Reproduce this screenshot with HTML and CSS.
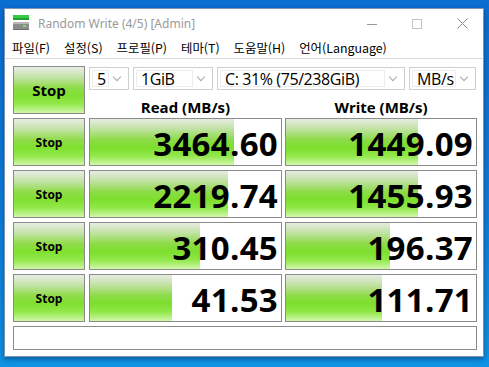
FILE: index.html
```html
<!DOCTYPE html>
<html lang="ko">
<head>
<meta charset="utf-8">
<title>Random Write (4/5) [Admin]</title>
<link rel="stylesheet" href="styles.css">
</head>
<body>
<div class="window">
  <div class="titlebar">
    <svg class="appicon" width="16" height="16" viewBox="0 0 16 16">
      <rect x="0" y="0" width="16" height="3" fill="#33cc44"/>
      <rect x="0" y="3" width="16" height="2" fill="#22a033"/>
      <rect x="0" y="7" width="16" height="2" fill="#b8b8b8"/>
      <rect x="0" y="9" width="16" height="6" fill="#8c8c8c"/>
      <rect x="10" y="10" width="3" height="2" fill="#7ddc6a"/>
      <rect x="0" y="14" width="16" height="1" fill="#6e6e6e"/>
    </svg>
    <span class="title">Random Write (4/5) [Admin]</span>
    <div class="controls">
      <svg class="ctl" width="10" height="10" viewBox="0 0 10 10"><path d="M0 5.5H10" stroke="#9a9a9a" stroke-width="1"/></svg>
      <svg class="ctl" width="10" height="10" viewBox="0 0 10 10"><rect x="0.5" y="0.5" width="9" height="9" fill="none" stroke="#c4c4c4" stroke-width="1"/></svg>
      <svg class="ctl" width="11" height="11" viewBox="0 0 11 11"><path d="M0.5 0.5L10.5 10.5M10.5 0.5L0.5 10.5" stroke="#8a8a8a" stroke-width="1"/></svg>
    </div>
  </div>
  <div class="menubar">
    <span class="menu">파일(F)</span>
    <span class="menu">설정(S)</span>
    <span class="menu">프로필(P)</span>
    <span class="menu">테마(T)</span>
    <span class="menu">도움말(H)</span>
    <span class="menu">언어(Language)</span>
  </div>
  <div class="client">
    <div class="board">
      <div class="btn big">Stop</div>
      <div class="topright">
        <div class="combos">
          <div class="combo w5"><span class="val">5</span><span class="arrow"></span></div>
          <div class="combo wsize"><span class="val">1GiB</span><span class="arrow"></span></div>
          <div class="combo wdrive"><span class="val">C: 31% (75/238GiB)</span><span class="arrow"></span></div>
          <div class="combo wunit"><span class="val">MB/s</span><span class="arrow"></span></div>
        </div>
        <div class="heads">
          <div class="head">Read (MB/s)</div>
          <div class="head">Write (MB/s)</div>
        </div>
      </div>

      <div class="btn">Stop</div>
      <div class="cell" style="--w:144px">3464.60</div>
      <div class="cell" style="--w:132px">1449.09</div>

      <div class="btn">Stop</div>
      <div class="cell" style="--w:138px">2219.74</div>
      <div class="cell" style="--w:132px">1455.93</div>

      <div class="btn">Stop</div>
      <div class="cell" style="--w:110px">310.45</div>
      <div class="cell" style="--w:104px">196.37</div>

      <div class="btn">Stop</div>
      <div class="cell" style="--w:82px">41.53</div>
      <div class="cell" style="--w:96px">111.71</div>

      <div class="status"></div>
    </div>
  </div>
</div>
</body>
</html>
```

FILE: styles.css
```css
* { box-sizing: border-box; }
html, body { margin: 0; padding: 0; }
body {
  width: 489px;
  height: 367px;
  overflow: hidden;
  background: linear-gradient(180deg, #0b6ed1 0%, #0a7ddb 55%, #0f92e4 100%);
  font-family: "Open Sans", "Noto Sans CJK KR", sans-serif;
}
.window {
  margin: 8px 0 0 4px;
  width: 480px;
  height: 349px;
  background: #fff;
  border: 1px solid #7d95b3;
  box-shadow: 0 2px 5px rgba(0, 20, 60, 0.45);
  display: flex;
  flex-direction: column;
}
.titlebar {
  height: 29px;
  display: flex;
  align-items: center;
  padding-left: 8px;
}
.appicon { margin-top: -2px; flex: none; }
.title {
  margin-left: 9px;
  font: 12px "Noto Sans", sans-serif;
  color: #9a9a9a;
}
.controls {
  margin-left: auto;
  margin-right: 15px;
  display: flex;
  align-items: center;
  gap: 35px;
}
.menubar {
  height: 21px;
  display: flex;
  align-items: center;
  padding-left: 0;
  border-bottom: 1px solid #d8d8d8;
  font: 12.4px "Noto Sans CJK KR", sans-serif;
  color: #000;
}
.menu { padding: 0 7px; }
.client {
  padding: 7px 0 0 8px;
}
.board {
  display: grid;
  grid-template-columns: 73px 193px 192px;
  grid-template-rows: 48px repeat(4, 48px) 24px;
  column-gap: 3px;
  row-gap: 4px;
}
.btn {
  width: 72px;
  border: 1px solid #8a8a8a;
  background: linear-gradient(180deg, #e9ede6 0%, #c4e3a8 22%, #8fdc4a 45%, #80e02f 62%, #92e84a 80%, #cff6a8 100%);
  display: flex;
  align-items: center;
  justify-content: center;
  font: 700 12px "Open Sans", sans-serif;
  color: #000;
}
.btn.big { font-size: 15px; }
.topright {
  grid-column: 2 / 4;
  display: flex;
  flex-direction: column;
}
.combos {
  margin-top: 1px;
  height: 23px;
  display: flex;
  gap: 4px;
}
.combo {
  border: 1px solid #cfcfcf;
  display: flex;
  align-items: stretch;
  padding: 2px;
  background: #fff;
}
.combo .val {
  flex: 1;
  border: 1px solid #ececec;
  padding-left: 4px;
  font: 16px/17px "Open Sans", sans-serif;
  letter-spacing: -0.4px;
  color: #000;
  white-space: nowrap;
}
.combo .arrow {
  width: 17px;
  flex: none;
  position: relative;
}
.combo .arrow::after {
  content: "";
  position: absolute;
  left: 5px;
  top: 4px;
  width: 5px;
  height: 5px;
  border-right: 1px solid #a8a8a8;
  border-bottom: 1px solid #a8a8a8;
  transform: rotate(45deg);
}
.w5 { width: 40px; }
.wsize { width: 80px; }
.wdrive { width: 188px; }
.wunit { width: 67px; }
.heads {
  display: grid;
  grid-template-columns: 193px 192px;
  column-gap: 3px;
  margin-top: 7px;
}
.head {
  text-align: center;
  font: 700 15px/20px "Open Sans", sans-serif;
  color: #000;
}
.cell {
  border: 1px solid #8a8a8a;
  background-color: #fff;
  background-image: linear-gradient(180deg, #e6ebe2 0%, #c0e2a2 22%, #8ddb48 45%, #7ddf2d 62%, #90e848 80%, #d1f7ab 100%);
  background-size: var(--w) 100%;
  background-repeat: no-repeat;
  display: flex;
  align-items: center;
  justify-content: flex-end;
  padding: 3px 3px 0 0;
  font: 700 33px "Open Sans", sans-serif;
  color: #000;
  letter-spacing: 0.3px;
}
.status {
  grid-column: 1 / 4;
  border: 1px solid #8a8a8a;
  background: #fff;
}
```
